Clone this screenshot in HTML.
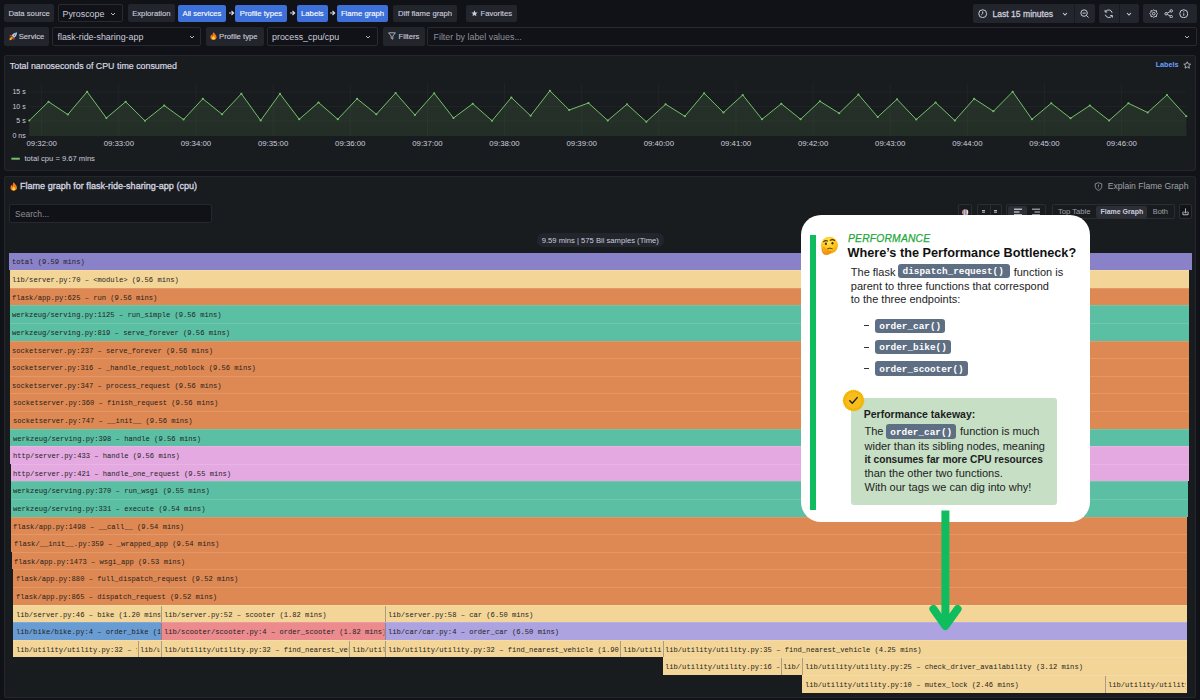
<!DOCTYPE html>
<html><head><meta charset="utf-8">
<style>
*{box-sizing:border-box;margin:0;padding:0}
html,body{width:1200px;height:700px;overflow:hidden;background:#111217;font-family:"Liberation Sans",sans-serif;color:#ccccdc;position:relative}
.a{position:absolute}
.lbl{position:absolute;background:#22252b;border-radius:2px;font-size:7.7px;color:#ccccdc;display:flex;align-items:center;justify-content:center;white-space:nowrap;-webkit-text-stroke:0.12px currentColor}
.sel{position:absolute;background:#111217;border:1px solid #282a30;border-radius:2px;font-size:8.9px;color:#ccccdc;display:flex;align-items:center;white-space:nowrap;padding-top:1.2px}
.btn{position:absolute;background:#3d71d9;border-radius:2px;font-size:7.7px;color:#fff;display:flex;align-items:center;justify-content:center;white-space:nowrap;-webkit-text-stroke:0.12px currentColor}
.dbtn{position:absolute;background:#22252b;border-radius:2px;font-size:7.7px;color:#ccccdc;display:flex;align-items:center;justify-content:center;white-space:nowrap;-webkit-text-stroke:0.12px currentColor}
.arr{position:absolute;top:8px;width:7px;height:10px}
.chev{position:absolute;width:6px;height:4px}
.panel{position:absolute;background:#191c1f;border:1px solid #24262c;border-radius:2px}
.xl{position:absolute;top:139px;width:40px;text-align:center;font-size:7.8px;color:#ccccdc;white-space:nowrap}
.yl{position:absolute;left:0;width:25.7px;text-align:right;font-size:7px;color:#ccccdc;white-space:nowrap}
.c{position:absolute;height:17.6px;overflow:hidden;white-space:nowrap;border-top:1px solid rgba(255,255,255,0.13)}
.c.r0{border-top:none}.c.r0 span{top:4.3px}
.c.s{box-shadow:inset 1px 0 rgba(110,110,110,0.55)}
.c span{position:absolute;left:2.8px;top:4px;font-family:"Liberation Mono",monospace;font-size:7.9px;line-height:10px;color:#1e1e1e;transform:scaleX(0.903);transform-origin:0 0;overflow:hidden}
.card{position:absolute;left:800.9px;top:214.7px;width:289px;height:307.3px;background:#fff;border-radius:20px}
.code{display:inline-block;background:#5e6e82;color:#fff;font-family:"Liberation Mono",monospace;font-weight:bold;border-radius:3px}
</style></head><body>

<!-- top row 1 -->
<div class="lbl" style="left:4.3px;top:4.1px;width:49.7px;height:18.4px">Data source</div>
<div class="sel" style="left:57.5px;top:4.1px;width:65px;height:18.4px;padding-left:4px">Pyroscope
  <svg class="chev" style="left:51.5px;top:7px" viewBox="0 0 6 4"><path d="M1 1 L3 3 L5 1" stroke="#ccccdc" stroke-width="0.9" fill="none"/></svg></div>
<div class="dbtn" style="left:127.75px;top:4.1px;width:47.25px;height:18.4px">Exploration</div>
<div class="btn" style="left:177.9px;top:4.75px;width:48.1px;height:17.25px">All services</div>
<svg class="arr" style="left:227.5px" viewBox="0 0 7 10"><path d="M1 5 H5.5 M3.5 3 L5.7 5 L3.5 7" stroke="#dcdce6" stroke-width="1.05" fill="none"/></svg>
<div class="btn" style="left:235px;top:4.75px;width:51.9px;height:17.25px">Profile types</div>
<svg class="arr" style="left:288.5px" viewBox="0 0 7 10"><path d="M1 5 H5.5 M3.5 3 L5.7 5 L3.5 7" stroke="#dcdce6" stroke-width="1.05" fill="none"/></svg>
<div class="btn" style="left:296.9px;top:4.75px;width:31px;height:17.25px">Labels</div>
<svg class="arr" style="left:329px" viewBox="0 0 7 10"><path d="M1 5 H5.5 M3.5 3 L5.7 5 L3.5 7" stroke="#dcdce6" stroke-width="1.05" fill="none"/></svg>
<div class="btn" style="left:337px;top:4.75px;width:51px;height:17.25px">Flame graph</div>
<div class="dbtn" style="left:393px;top:4.75px;width:64px;height:17.25px">Diff flame graph</div>
<div class="dbtn" style="left:466px;top:4.75px;width:51px;height:17.25px;justify-content:flex-start;padding-left:5px">
  <svg style="width:7px;height:7px;margin-right:2.5px" viewBox="0 0 10 10"><path d="M5 0.5 L6.3 3.4 L9.5 3.7 L7.1 5.8 L7.8 9 L5 7.3 L2.2 9 L2.9 5.8 L0.5 3.7 L3.7 3.4 Z" fill="#ccccdc"/></svg>Favorites</div>

<!-- time picker -->
<div class="dbtn" style="left:972.9px;top:4.1px;width:121.7px;height:18.8px;justify-content:flex-start;font-size:8.6px;-webkit-text-stroke:0.3px #ccccdc">
  <svg style="position:absolute;left:5.5px;top:4.8px;width:9.4px;height:9.4px" viewBox="0 0 10 10"><circle cx="5" cy="5" r="4.2" stroke="#ccccdc" stroke-width="1.05" fill="none"/><path d="M5 2.6 V5 L3.6 6.2" stroke="#ccccdc" stroke-width="1.05" fill="none"/></svg>
  <span style="position:absolute;left:19.5px;top:5px;line-height:10px">Last 15 minutes</span>
  <svg class="chev" style="left:89.5px;top:7.5px" viewBox="0 0 6 4"><path d="M1 1 L3 3 L5 1" stroke="#ccccdc" stroke-width="1.05" fill="none"/></svg>
  <div class="a" style="left:101.5px;top:0;width:1px;height:18.8px;background:#181b1f"></div>
  <svg style="position:absolute;left:107px;top:4.6px;width:9.5px;height:9.5px" viewBox="0 0 10 10"><circle cx="4.3" cy="4.3" r="3.4" stroke="#ccccdc" stroke-width="1.05" fill="none"/><path d="M2.6 4.3 H6 M6.8 6.8 L9 9" stroke="#ccccdc" stroke-width="1.05" fill="none"/></svg>
</div>
<div class="dbtn" style="left:1099.2px;top:4.1px;width:39.6px;height:18.8px">
  <svg style="position:absolute;left:5.2px;top:4.6px;width:9.5px;height:9.5px" viewBox="0 0 10 10"><path d="M8.6 4 A3.8 3.8 0 0 0 1.8 2.6 M1.4 6 A3.8 3.8 0 0 0 8.2 7.4" stroke="#ccccdc" stroke-width="1.05" fill="none"/><path d="M1.2 1 V3.2 H3.4 M8.8 9 V6.8 H6.6" stroke="#ccccdc" stroke-width="1.05" fill="none"/></svg>
  <div class="a" style="left:20.3px;top:0;width:1px;height:18.8px;background:#181b1f"></div>
  <svg class="chev" style="left:27px;top:7.5px" viewBox="0 0 6 4"><path d="M1 1 L3 3 L5 1" stroke="#ccccdc" stroke-width="1.05" fill="none"/></svg>
</div>
<div class="dbtn" style="left:1143px;top:4.1px;width:53.5px;height:18.8px">
  <svg style="position:absolute;left:5.5px;top:4.6px;width:9.5px;height:9.5px" viewBox="0 0 10 10"><path d="M5 0.8 L6.2 1.9 L7.9 1.8 L8 3.6 L9.2 4.8 L8 6.1 L7.9 8 L6.2 7.9 L5 9 L3.8 7.9 L2.1 8 L2 6.1 L0.8 4.8 L2 3.6 L2.1 1.8 L3.8 1.9 Z" stroke="#ccccdc" stroke-width="1.0" fill="none"/><circle cx="5" cy="4.9" r="1.4" stroke="#ccccdc" stroke-width="1.0" fill="none"/></svg>
  <svg style="position:absolute;left:20.5px;top:4.6px;width:9.5px;height:9.5px" viewBox="0 0 10 10"><circle cx="7.6" cy="2" r="1.3" stroke="#ccccdc" stroke-width="1.0" fill="none"/><circle cx="2.2" cy="5" r="1.3" stroke="#ccccdc" stroke-width="1.0" fill="none"/><circle cx="7.6" cy="8" r="1.3" stroke="#ccccdc" stroke-width="1.0" fill="none"/><path d="M3.4 4.3 L6.4 2.7 M3.4 5.7 L6.4 7.3" stroke="#ccccdc" stroke-width="1.0"/></svg>
  <svg style="position:absolute;left:35.5px;top:4.6px;width:9.5px;height:9.5px" viewBox="0 0 10 10"><circle cx="5" cy="5" r="4.2" stroke="#ccccdc" stroke-width="1.05" fill="none"/><path d="M5 4.5 V7.2" stroke="#ccccdc" stroke-width="1"/><circle cx="5" cy="3" r="0.6" fill="#ccccdc"/></svg>
</div>

<!-- top row 2 -->
<div class="lbl" style="left:4.3px;top:27.1px;width:44.7px;height:18.5px;justify-content:flex-start;padding-left:4.5px">
  <svg style="width:8.5px;height:8.5px;margin-right:1.6px;margin-left:-0.2px" viewBox="0 0 10 10"><path d="M9.6 0.6 C7 0.6 4.6 1.8 3 4 L6 7 C8.2 5.4 9.4 3 9.6 0.6 Z" fill="#a9cdea"/><path d="M9.6 0.6 C8.4 0.8 7.4 1.3 6.4 2 L8 3.6 C8.7 2.6 9.3 1.7 9.6 0.6 Z" fill="#7fb6e6"/><circle cx="6.3" cy="3.7" r="1.1" fill="#f4d6d6"/><circle cx="6.3" cy="3.7" r="0.65" fill="#6a0f10"/><path d="M3.4 3.6 L1.2 3.4 L0.4 5 L2.6 5.2 Z" fill="#e8361f"/><path d="M6.4 6.6 L6.6 8.8 L5 9.6 L4.8 7.4 Z" fill="#e81d1d"/><path d="M3 5.2 L4.8 7 L2.4 9.4 L0.6 9.6 L0.8 7.6 Z" fill="#f7c316"/><path d="M3.2 5.8 L4.2 6.8 L2.6 8.4 L1.6 8.4 L1.6 7.4 Z" fill="#ff8a1c"/></svg>Service</div>
<div class="sel" style="left:52px;top:27.1px;width:148.6px;height:18.5px;padding-left:4.5px">flask-ride-sharing-app
  <svg class="chev" style="left:135.5px;top:7px" viewBox="0 0 6 4"><path d="M1 1 L3 3 L5 1" stroke="#ccccdc" stroke-width="0.9" fill="none"/></svg></div>
<div class="lbl" style="left:205.6px;top:27.1px;width:58.2px;height:18.5px;justify-content:flex-start;padding-left:4.5px">
  <svg style="width:7px;height:8px;margin-right:2px" viewBox="0 0 7 8"><path d="M3.5 0.3 C5 2 6.6 3.4 6.6 5.2 C6.6 6.9 5.2 7.8 3.5 7.8 C1.8 7.8 0.4 6.9 0.4 5.2 C0.4 3.8 1.2 3 1.6 2.4 C1.8 3.2 2.2 3.6 2.6 3.7 C2.4 2.4 2.8 1.2 3.5 0.3 Z" fill="#f4781c"/><path d="M3.5 4 C4.4 4.8 5 5.6 5 6.3 C5 7.1 4.3 7.6 3.5 7.6 C2.7 7.6 2 7.1 2 6.3 C2 5.5 2.8 4.8 3.5 4 Z" fill="#ffd23a"/></svg>Profile type</div>
<div class="sel" style="left:266.5px;top:27.1px;width:111.5px;height:18.5px;padding-left:4.5px">process_cpu/cpu
  <svg class="chev" style="left:97px;top:7px" viewBox="0 0 6 4"><path d="M1 1 L3 3 L5 1" stroke="#ccccdc" stroke-width="0.9" fill="none"/></svg></div>
<div class="lbl" style="left:383px;top:27.1px;width:41.6px;height:18.5px;justify-content:flex-start;padding-left:5px">
  <svg style="width:8px;height:8px;margin-right:2.5px" viewBox="0 0 8 8"><path d="M0.6 0.8 H7.4 L4.8 4 V7.2 L3.2 6.2 V4 Z" stroke="#ccccdc" stroke-width="0.8" fill="none" stroke-linejoin="round"/></svg>Filters</div>
<div class="sel" style="left:427px;top:27.1px;width:769.8px;height:18.9px;padding-left:5.5px;color:#8e8e99">Filter by label values...
  <svg class="chev" style="left:756px;top:7px" viewBox="0 0 6 4"><path d="M1 1 L3 3 L5 1" stroke="#ccccdc" stroke-width="0.9" fill="none"/></svg></div>

<!-- chart panel -->
<div class="panel" style="left:4.3px;top:55.1px;width:1192.1px;height:116.2px"></div>
<div class="a" style="left:9.8px;top:60.5px;font-size:8.86px;line-height:10px;color:#d8d8e2;white-space:nowrap;-webkit-text-stroke:0.2px #d8d8e2">Total nanoseconds of CPU time consumed</div>
<div class="a" style="left:1155.7px;top:60.3px;font-size:7.2px;line-height:10px;color:#6e9fff;font-weight:bold;white-space:nowrap">Labels</div>
<svg class="a" style="left:1183.3px;top:60.9px;width:8.4px;height:8.4px" viewBox="0 0 10 10"><path d="M5 0.9 L6.2 3.5 L9.1 3.8 L6.9 5.7 L7.6 8.6 L5 7.1 L2.4 8.6 L3.1 5.7 L0.9 3.8 L3.8 3.5 Z" stroke="#ccccdc" stroke-width="0.9" fill="none" stroke-linejoin="round"/></svg>
<div class="yl" style="top:88.3px">15 s</div>
<div class="yl" style="top:102.6px">10 s</div>
<div class="yl" style="top:117.2px">5 s</div>
<div class="yl" style="top:131.6px">0 ns</div>
<svg class="a" style="left:0;top:0;width:1200px;height:170px" viewBox="0 0 1200 170">
  <defs><linearGradient id="g" x1="0" y1="0" x2="0" y2="1"><stop offset="0" stop-color="#73bf69" stop-opacity="0.13"/><stop offset="1" stop-color="#73bf69" stop-opacity="0.11"/></linearGradient></defs>
  <g stroke="rgba(204,204,220,0.045)" stroke-width="1">
    <line x1="29.25" y1="92.1" x2="1186.25" y2="92.1"/><line x1="29.25" y1="106.4" x2="1186.25" y2="106.4"/><line x1="29.25" y1="121" x2="1186.25" y2="121"/>
    <line x1="41.70" y1="83" x2="41.70" y2="136"/><line x1="118.84" y1="83" x2="118.84" y2="136"/><line x1="195.98" y1="83" x2="195.98" y2="136"/><line x1="273.12" y1="83" x2="273.12" y2="136"/><line x1="350.26" y1="83" x2="350.26" y2="136"/><line x1="427.40" y1="83" x2="427.40" y2="136"/><line x1="504.54" y1="83" x2="504.54" y2="136"/><line x1="581.68" y1="83" x2="581.68" y2="136"/><line x1="658.82" y1="83" x2="658.82" y2="136"/><line x1="735.96" y1="83" x2="735.96" y2="136"/><line x1="813.10" y1="83" x2="813.10" y2="136"/><line x1="890.24" y1="83" x2="890.24" y2="136"/><line x1="967.38" y1="83" x2="967.38" y2="136"/><line x1="1044.52" y1="83" x2="1044.52" y2="136"/><line x1="1121.66" y1="83" x2="1121.66" y2="136"/>
  </g>
  <path d="M29.25,136 L29.25,120.50 L48.53,101.75 L67.82,114.50 L87.10,91.75 L106.38,118.00 L125.67,101.75 L144.95,120.75 L164.23,105.50 L183.52,119.50 L202.80,98.75 L222.08,114.25 L241.37,93.75 L260.65,120.50 L279.93,93.75 L299.22,119.25 L318.50,102.50 L337.78,119.25 L357.07,98.75 L376.35,114.25 L395.63,93.00 L414.92,115.00 L434.20,93.25 L453.48,118.00 L472.77,103.75 L492.05,120.75 L511.33,97.50 L530.62,115.75 L549.90,90.75 L569.18,110.00 L588.47,103.00 L607.75,120.50 L627.03,104.25 L646.32,121.75 L665.60,104.25 L684.88,116.25 L704.17,93.25 L723.45,112.50 L742.73,95.00 L762.02,119.25 L781.30,103.75 L800.58,119.25 L819.87,101.25 L839.15,113.25 L858.43,94.50 L877.72,117.00 L897.00,99.25 L916.28,119.50 L935.57,102.50 L954.85,120.50 L974.13,98.75 L993.42,111.25 L1012.70,91.75 L1031.98,119.25 L1051.27,103.25 L1070.55,118.25 L1089.83,105.50 L1109.12,120.50 L1128.40,103.25 L1147.68,112.50 L1166.97,95.00 L1186.25,116.25 L1186.25,136 Z" fill="url(#g)"/>
  <polyline points="29.25,120.50 48.53,101.75 67.82,114.50 87.10,91.75 106.38,118.00 125.67,101.75 144.95,120.75 164.23,105.50 183.52,119.50 202.80,98.75 222.08,114.25 241.37,93.75 260.65,120.50 279.93,93.75 299.22,119.25 318.50,102.50 337.78,119.25 357.07,98.75 376.35,114.25 395.63,93.00 414.92,115.00 434.20,93.25 453.48,118.00 472.77,103.75 492.05,120.75 511.33,97.50 530.62,115.75 549.90,90.75 569.18,110.00 588.47,103.00 607.75,120.50 627.03,104.25 646.32,121.75 665.60,104.25 684.88,116.25 704.17,93.25 723.45,112.50 742.73,95.00 762.02,119.25 781.30,103.75 800.58,119.25 819.87,101.25 839.15,113.25 858.43,94.50 877.72,117.00 897.00,99.25 916.28,119.50 935.57,102.50 954.85,120.50 974.13,98.75 993.42,111.25 1012.70,91.75 1031.98,119.25 1051.27,103.25 1070.55,118.25 1089.83,105.50 1109.12,120.50 1128.40,103.25 1147.68,112.50 1166.97,95.00 1186.25,116.25" fill="none" stroke="#73bf69" stroke-width="1"/>
  <g fill="#73bf69"><circle cx="29.25" cy="120.50" r="1.1"/><circle cx="48.53" cy="101.75" r="1.1"/><circle cx="67.82" cy="114.50" r="1.1"/><circle cx="87.10" cy="91.75" r="1.1"/><circle cx="106.38" cy="118.00" r="1.1"/><circle cx="125.67" cy="101.75" r="1.1"/><circle cx="144.95" cy="120.75" r="1.1"/><circle cx="164.23" cy="105.50" r="1.1"/><circle cx="183.52" cy="119.50" r="1.1"/><circle cx="202.80" cy="98.75" r="1.1"/><circle cx="222.08" cy="114.25" r="1.1"/><circle cx="241.37" cy="93.75" r="1.1"/><circle cx="260.65" cy="120.50" r="1.1"/><circle cx="279.93" cy="93.75" r="1.1"/><circle cx="299.22" cy="119.25" r="1.1"/><circle cx="318.50" cy="102.50" r="1.1"/><circle cx="337.78" cy="119.25" r="1.1"/><circle cx="357.07" cy="98.75" r="1.1"/><circle cx="376.35" cy="114.25" r="1.1"/><circle cx="395.63" cy="93.00" r="1.1"/><circle cx="414.92" cy="115.00" r="1.1"/><circle cx="434.20" cy="93.25" r="1.1"/><circle cx="453.48" cy="118.00" r="1.1"/><circle cx="472.77" cy="103.75" r="1.1"/><circle cx="492.05" cy="120.75" r="1.1"/><circle cx="511.33" cy="97.50" r="1.1"/><circle cx="530.62" cy="115.75" r="1.1"/><circle cx="549.90" cy="90.75" r="1.1"/><circle cx="569.18" cy="110.00" r="1.1"/><circle cx="588.47" cy="103.00" r="1.1"/><circle cx="607.75" cy="120.50" r="1.1"/><circle cx="627.03" cy="104.25" r="1.1"/><circle cx="646.32" cy="121.75" r="1.1"/><circle cx="665.60" cy="104.25" r="1.1"/><circle cx="684.88" cy="116.25" r="1.1"/><circle cx="704.17" cy="93.25" r="1.1"/><circle cx="723.45" cy="112.50" r="1.1"/><circle cx="742.73" cy="95.00" r="1.1"/><circle cx="762.02" cy="119.25" r="1.1"/><circle cx="781.30" cy="103.75" r="1.1"/><circle cx="800.58" cy="119.25" r="1.1"/><circle cx="819.87" cy="101.25" r="1.1"/><circle cx="839.15" cy="113.25" r="1.1"/><circle cx="858.43" cy="94.50" r="1.1"/><circle cx="877.72" cy="117.00" r="1.1"/><circle cx="897.00" cy="99.25" r="1.1"/><circle cx="916.28" cy="119.50" r="1.1"/><circle cx="935.57" cy="102.50" r="1.1"/><circle cx="954.85" cy="120.50" r="1.1"/><circle cx="974.13" cy="98.75" r="1.1"/><circle cx="993.42" cy="111.25" r="1.1"/><circle cx="1012.70" cy="91.75" r="1.1"/><circle cx="1031.98" cy="119.25" r="1.1"/><circle cx="1051.27" cy="103.25" r="1.1"/><circle cx="1070.55" cy="118.25" r="1.1"/><circle cx="1089.83" cy="105.50" r="1.1"/><circle cx="1109.12" cy="120.50" r="1.1"/><circle cx="1128.40" cy="103.25" r="1.1"/><circle cx="1147.68" cy="112.50" r="1.1"/><circle cx="1166.97" cy="95.00" r="1.1"/><circle cx="1186.25" cy="116.25" r="1.1"/></g>
  <line x1="11.4" y1="158.7" x2="19.8" y2="158.7" stroke="#73bf69" stroke-width="2" stroke-linecap="butt"/>
</svg>
<div class="xl" style="left:21.70px">09:32:00</div><div class="xl" style="left:98.84px">09:33:00</div><div class="xl" style="left:175.98px">09:34:00</div><div class="xl" style="left:253.12px">09:35:00</div><div class="xl" style="left:330.26px">09:36:00</div><div class="xl" style="left:407.40px">09:37:00</div><div class="xl" style="left:484.54px">09:38:00</div><div class="xl" style="left:561.68px">09:39:00</div><div class="xl" style="left:638.82px">09:40:00</div><div class="xl" style="left:715.96px">09:41:00</div><div class="xl" style="left:793.10px">09:42:00</div><div class="xl" style="left:870.24px">09:43:00</div><div class="xl" style="left:947.38px">09:44:00</div><div class="xl" style="left:1024.52px">09:45:00</div><div class="xl" style="left:1101.66px">09:46:00</div>
<div class="a" style="left:24.5px;top:153.5px;font-size:7.61px;line-height:10px;color:#ccccdc;white-space:nowrap">total cpu = 9.67 mins</div>

<!-- flame panel -->
<div class="panel" style="left:4.3px;top:176px;width:1192.1px;height:521.6px"></div>
<svg class="a" style="left:9.8px;top:182px;width:7.4px;height:9px" viewBox="0 0 7 8" preserveAspectRatio="none"><path d="M3.5 0.3 C5 2 6.6 3.4 6.6 5.2 C6.6 6.9 5.2 7.8 3.5 7.8 C1.8 7.8 0.4 6.9 0.4 5.2 C0.4 3.8 1.2 3 1.6 2.4 C1.8 3.2 2.2 3.6 2.6 3.7 C2.4 2.4 2.8 1.2 3.5 0.3 Z" fill="#f4781c"/><path d="M3.5 4 C4.4 4.8 5 5.6 5 6.3 C5 7.1 4.3 7.6 3.5 7.6 C2.7 7.6 2 7.1 2 6.3 C2 5.5 2.8 4.8 3.5 4 Z" fill="#ffd23a"/></svg>
<div class="a" style="left:20px;top:181.3px;font-size:9.05px;line-height:10px;color:#d8d8e2;white-space:nowrap;-webkit-text-stroke:0.3px #d8d8e2">Flame graph for flask-ride-sharing-app (cpu)</div>
<div class="a" style="left:1093.5px;top:181.5px;width:9px;height:9px"><svg viewBox="0 0 10 10" width="9" height="9" style="display:block"><path d="M5 0.8 L8.6 2 V5 C8.6 7 7 8.6 5 9.3 C3 8.6 1.4 7 1.4 5 V2 Z" stroke="#9fa0a8" stroke-width="0.9" fill="none"/><path d="M5 3 V5.3" stroke="#9fa0a8" stroke-width="0.9"/><circle cx="5" cy="6.7" r="0.5" fill="#9fa0a8"/></svg></div>
<div class="a" style="left:1107.7px;top:181.3px;font-size:8.6px;line-height:10px;color:#9fa0a8;white-space:nowrap">Explain Flame Graph</div>
<div class="sel" style="left:9.3px;top:204.3px;width:203px;height:19px;padding-left:4.8px;font-size:8.5px;color:#8e8e99;border-color:#26282d">Search...</div>

<!-- toolbar -->
<div class="a" style="left:958.3px;top:204.4px;width:14.2px;height:14.6px;border:1px solid #2b2d33;border-radius:2px"></div>
<div class="a" style="left:977px;top:204.4px;width:24.7px;height:14.6px;border:1px solid #2b2d33;border-radius:2px"></div>
<div class="a" style="left:989.6px;top:204.4px;width:1px;height:14.6px;background:#2b2d33"></div>
<div class="a" style="left:1006.25px;top:204.4px;width:40px;height:14.6px;border:1px solid #2b2d33;border-radius:2px"></div>
<div class="a" style="left:1008.2px;top:206.2px;width:18.5px;height:11.4px;background:#2c2f36;border-radius:2px"></div>
<div class="a" style="left:1051.5px;top:204.4px;width:123.1px;height:14.6px;border:1px solid #2b2d33;border-radius:2px"></div>
<div class="a" style="left:1095.8px;top:206.2px;width:51.7px;height:11.4px;background:#2c2f36;border-radius:2px"></div>
<div class="a" style="left:1179.2px;top:204.4px;width:12.6px;height:14.6px;border:1px solid #2b2d33;border-radius:2px;background:#121317"></div>
<svg class="a" style="left:962px;top:208.5px;width:6.6px;height:6.6px" viewBox="0 0 8 8"><defs><clipPath id="cc"><circle cx="4" cy="4" r="3.8"/></clipPath></defs><g clip-path="url(#cc)"><rect x="0" y="0" width="2" height="8" fill="#f0a070"/><rect x="2" y="0" width="2" height="8" fill="#e8a6d8"/><rect x="4" y="0" width="2" height="8" fill="#8fb8e8"/><rect x="6" y="0" width="2" height="8" fill="#f0e08a"/></g></svg>
<svg class="a" style="left:982px;top:209px;width:3.4px;height:4.4px" viewBox="0 0 4 5"><path d="M0.3 1.6 H3.7 M0.3 3.6 H3.7" stroke="#b0b0bc" stroke-width="1.2" stroke-linecap="round"/></svg>
<svg class="a" style="left:994px;top:209px;width:3.4px;height:4.4px" viewBox="0 0 4 5"><path d="M0.3 1.6 H3.7 M0.3 3.6 H3.7" stroke="#b0b0bc" stroke-width="1.2" stroke-linecap="round"/></svg>
<svg class="a" style="left:1013.5px;top:207.5px;width:8px;height:8px" viewBox="0 0 8 8"><path d="M0 1.2 H8 M0 4 H5.5 M0 6.8 H8" stroke="#b4b4bc" stroke-width="1.5"/></svg>
<svg class="a" style="left:1032px;top:207.5px;width:8px;height:8px" viewBox="0 0 8 8"><path d="M0 1.2 H8 M2.5 4 H8 M0 6.8 H8" stroke="#8e8e99" stroke-width="1.5"/></svg>
<svg class="a" style="left:1181.8px;top:208.2px;width:7px;height:7.6px" viewBox="0 0 7 8"><path d="M0.8 4 V6.6 Q0.8 7.2 1.4 7.2 H5.6 Q6.2 7.2 6.2 6.6 V4" stroke="#b4b4bc" stroke-width="1.1" fill="none"/><path d="M3.5 0.4 V5.4 M1.9 3.8 L3.5 5.4 L5.1 3.8" stroke="#b4b4bc" stroke-width="1" fill="none"/></svg>
<div class="a" style="left:1057.9px;top:207px;font-size:7.67px;line-height:9px;color:#9fa0a8;white-space:nowrap">Top Table</div>
<div class="a" style="left:1100.4px;top:207px;font-size:7.02px;line-height:9px;font-weight:bold;color:#ccccdc;white-space:nowrap">Flame Graph</div>
<div class="a" style="left:1152.7px;top:207px;font-size:7.44px;line-height:9px;color:#9fa0a8;white-space:nowrap">Both</div>

<div class="a" style="left:536.7px;top:232.7px;width:127.3px;height:14.6px;background:#22252b;border-radius:7px"></div>
<div class="a" style="left:541.7px;top:235.5px;font-size:7.65px;line-height:9px;color:#ccccdc;white-space:nowrap">9.59 mins | 575 Bil samples (Time)</div>

<!-- flame graph -->
<div class="c r0" style="left:9.10px;top:252.60px;width:1182.50px;background:#8982c9"><span style="width:1305.43px">total (9.59 mins)</span></div><div class="c" style="left:9.60px;top:270.20px;width:1179.30px;background:#f3d597"><span style="width:1301.88px">lib/server.py:70 – &lt;module&gt; (9.56 mins)</span></div><div class="c" style="left:9.60px;top:287.80px;width:1179.30px;background:#de8953"><span style="width:1301.88px">flask/app.py:625 – run (9.56 mins)</span></div><div class="c" style="left:9.60px;top:305.40px;width:1179.30px;background:#5bbfa3"><span style="width:1301.88px">werkzeug/serving.py:1125 – run_simple (9.56 mins)</span></div><div class="c" style="left:9.60px;top:323.00px;width:1179.30px;background:#5bbfa3"><span style="width:1301.88px">werkzeug/serving.py:819 – serve_forever (9.56 mins)</span></div><div class="c" style="left:9.60px;top:340.60px;width:1179.30px;background:#de8953"><span style="width:1301.88px">socketserver.py:237 – serve_forever (9.56 mins)</span></div><div class="c" style="left:9.70px;top:358.20px;width:1179.20px;background:#de8953"><span style="width:1301.77px">socketserver.py:316 – _handle_request_noblock (9.56 mins)</span></div><div class="c" style="left:9.70px;top:375.80px;width:1179.20px;background:#de8953"><span style="width:1301.77px">socketserver.py:347 – process_request (9.56 mins)</span></div><div class="c" style="left:9.75px;top:393.40px;width:1179.15px;background:#de8953"><span style="width:1301.72px">socketserver.py:360 – finish_request (9.56 mins)</span></div><div class="c" style="left:9.75px;top:411.00px;width:1179.15px;background:#de8953"><span style="width:1301.72px">socketserver.py:747 – __init__ (9.56 mins)</span></div><div class="c" style="left:9.75px;top:428.60px;width:1179.25px;background:#5bbfa3"><span style="width:1301.83px">werkzeug/serving.py:398 – handle (9.56 mins)</span></div><div class="c" style="left:10.20px;top:446.20px;width:1178.80px;background:#e4a9e0"><span style="width:1301.33px">http/server.py:433 – handle (9.56 mins)</span></div><div class="c" style="left:10.70px;top:463.80px;width:1178.30px;background:#e4a9e0"><span style="width:1300.78px">http/server.py:421 – handle_one_request (9.55 mins)</span></div><div class="c" style="left:10.70px;top:481.40px;width:1177.50px;background:#5bbfa3"><span style="width:1299.89px">werkzeug/serving.py:370 – run_wsgi (9.55 mins)</span></div><div class="c" style="left:10.70px;top:499.00px;width:1177.50px;background:#5bbfa3"><span style="width:1299.89px">werkzeug/serving.py:331 – execute (9.54 mins)</span></div><div class="c" style="left:10.70px;top:516.60px;width:1176.70px;background:#de8953"><span style="width:1299.00px">flask/app.py:1498 – __call__ (9.54 mins)</span></div><div class="c" style="left:11.00px;top:534.20px;width:1176.40px;background:#de8953"><span style="width:1298.67px">flask/__init__.py:359 – _wrapped_app (9.54 mins)</span></div><div class="c" style="left:11.50px;top:551.80px;width:1175.90px;background:#de8953"><span style="width:1298.12px">flask/app.py:1473 – wsgi_app (9.53 mins)</span></div><div class="c" style="left:13.00px;top:569.40px;width:1174.40px;background:#de8953"><span style="width:1296.46px">flask/app.py:880 – full_dispatch_request (9.52 mins)</span></div><div class="c" style="left:13.00px;top:587.00px;width:1174.20px;background:#de8953"><span style="width:1296.23px">flask/app.py:865 – dispatch_request (9.52 mins)</span></div><div class="c" style="left:13.00px;top:604.60px;width:147.80px;background:#f3d597"><span style="width:159.58px">lib/server.py:46 – bike (1.20 mins)</span></div><div class="c s" style="left:160.80px;top:604.60px;width:224.20px;background:#f3d597"><span style="width:244.19px">lib/server.py:52 – scooter (1.82 mins)</span></div><div class="c s" style="left:385.00px;top:604.60px;width:801.70px;background:#f3d597"><span style="width:883.72px">lib/server.py:58 – car (6.50 mins)</span></div><div class="c" style="left:13.00px;top:622.20px;width:147.80px;background:#6a9cd4"><span style="width:159.58px">lib/bike/bike.py:4 – order_bike (1.20 mins)</span></div><div class="c s" style="left:160.80px;top:622.20px;width:224.20px;background:#ec8b8e"><span style="width:244.19px">lib/scooter/scooter.py:4 – order_scooter (1.82 mins)</span></div><div class="c s" style="left:385.00px;top:622.20px;width:801.70px;background:#aca3e0"><span style="width:883.72px">lib/car/car.py:4 – order_car (6.50 mins)</span></div><div class="c" style="left:13.00px;top:639.80px;width:124.50px;background:#f3d597"><span style="width:133.78px">lib/utility/utility.py:32 – find_nearest_vehicle (1.01 mins)</span></div><div class="c s" style="left:137.50px;top:639.80px;width:23.30px;background:#f3d597"><span style="width:21.71px">lib/utility/utility.py:35 – find_nearest_vehicle</span></div><div class="c s" style="left:160.80px;top:639.80px;width:187.95px;background:#f3d597"><span style="width:204.04px">lib/utility/utility.py:32 – find_nearest_vehicle (1.52 mins)</span></div><div class="c s" style="left:348.75px;top:639.80px;width:36.25px;background:#f3d597"><span style="width:36.05px">lib/utility/utility.py:35</span></div><div class="c s" style="left:385.00px;top:639.80px;width:235.00px;background:#f3d597"><span style="width:256.15px">lib/utility/utility.py:32 – find_nearest_vehicle (1.90 mins)</span></div><div class="c s" style="left:620.00px;top:639.80px;width:42.50px;background:#f3d597"><span style="width:42.97px">lib/utility/utility.py:16</span></div><div class="c s" style="left:662.50px;top:639.80px;width:524.20px;background:#f3d597"><span style="width:576.41px">lib/utility/utility.py:35 – find_nearest_vehicle (4.25 mins)</span></div><div class="c" style="left:662.50px;top:657.40px;width:118.00px;background:#f3d597"><span style="width:126.58px">lib/utility/utility.py:16 – check_driver_availability (0.96 mins)</span></div><div class="c s" style="left:780.50px;top:657.40px;width:21.25px;background:#f3d597"><span style="width:19.44px">lib/utility/utility.py:35</span></div><div class="c s" style="left:801.75px;top:657.40px;width:384.95px;background:#f3d597"><span style="width:422.20px">lib/utility/utility.py:25 – check_driver_availability (3.12 mins)</span></div><div class="c" style="left:801.75px;top:675.00px;width:303.55px;background:#f3d597"><span style="width:332.06px">lib/utility/utility.py:10 – mutex_lock (2.46 mins)</span></div><div class="c s" style="left:1105.30px;top:675.00px;width:81.40px;background:#f3d597"><span style="width:86.05px">lib/utility/utility.py:25</span></div>

<!-- card -->
<div class="card"></div>
<div class="a" style="left:810px;top:234.9px;width:5.7px;height:275.3px;background:#0fbd5e"></div>
<div class="a" style="left:848.00px;top:232.75px;font-size:10.3px;line-height:12.36px;font-style:italic;color:#1fa83a;white-space:nowrap;letter-spacing:0.2px;-webkit-text-stroke:0.25px #1fa83a;">PERFORMANCE</div>
<div class="a" style="left:847.50px;top:245.98px;font-size:12.7px;line-height:15.24px;font-weight:bold;color:#111;white-space:nowrap;">Where’s the Performance Bottleneck?</div>
<div class="a" style="left:850.80px;top:265.99px;font-size:11px;line-height:13.20px;color:#1d1d1d;white-space:nowrap;">The flask</div>
<div class="a" style="left:898.30px;top:263.50px;width:111.30px;height:14.40px;background:#5e6e83;border-radius:3px"></div>
<div class="a" style="left:902.60px;top:265.85px;font-size:9.4px;line-height:11.28px;font-family:'Liberation Mono',monospace;font-weight:bold;color:#fff;white-space:nowrap;transform:scaleX(1.0);">dispatch_request()</div>
<div class="a" style="left:1013.70px;top:265.99px;font-size:11px;line-height:13.20px;color:#1d1d1d;white-space:nowrap;">function is</div>
<div class="a" style="left:850.80px;top:279.59px;font-size:11px;line-height:13.20px;color:#1d1d1d;white-space:nowrap;">parent to three functions that correspond</div>
<div class="a" style="left:850.80px;top:293.09px;font-size:11px;line-height:13.20px;color:#1d1d1d;white-space:nowrap;">to the three endpoints:</div>
<div class="a" style="left:863.8px;top:325.45px;width:4.8px;height:0.8px;background:#333"></div>
<div class="a" style="left:875.20px;top:318.60px;width:69.50px;height:14.40px;background:#5e6e83;border-radius:3px"></div>
<div class="a" style="left:879.30px;top:320.95px;font-size:9.4px;line-height:11.28px;font-family:'Liberation Mono',monospace;font-weight:bold;color:#fff;white-space:nowrap;transform:scaleX(1.0);">order_car()</div>
<div class="a" style="left:863.8px;top:346.75px;width:4.8px;height:0.8px;background:#333"></div>
<div class="a" style="left:875.20px;top:339.80px;width:76.30px;height:14.60px;background:#5e6e83;border-radius:3px"></div>
<div class="a" style="left:879.30px;top:342.25px;font-size:9.4px;line-height:11.28px;font-family:'Liberation Mono',monospace;font-weight:bold;color:#fff;white-space:nowrap;transform:scaleX(1.0);">order_bike()</div>
<div class="a" style="left:863.8px;top:368.05px;width:4.8px;height:0.8px;background:#333"></div>
<div class="a" style="left:875.20px;top:361.20px;width:92.60px;height:14.40px;background:#5e6e83;border-radius:3px"></div>
<div class="a" style="left:879.30px;top:363.55px;font-size:9.4px;line-height:11.28px;font-family:'Liberation Mono',monospace;font-weight:bold;color:#fff;white-space:nowrap;transform:scaleX(1.0);">order_scooter()</div>
<div class="a" style="left:851.25px;top:398px;width:205.75px;height:106.5px;background:#c6dfc5;border-radius:3px"></div>
<svg class="a" style="left:841.5px;top:388.5px;width:23px;height:23px" viewBox="0 0 23 23">
<path d="M22.50,11.50 L21.54,12.63 L22.22,13.95 L21.03,14.84 L21.41,16.27 L20.05,16.87 L20.10,18.36 L18.64,18.64 L18.36,20.10 L16.87,20.05 L16.27,21.41 L14.84,21.03 L13.95,22.22 L12.63,21.54 L11.50,22.50 L10.37,21.54 L9.05,22.22 L8.16,21.03 L6.73,21.41 L6.13,20.05 L4.64,20.10 L4.36,18.64 L2.90,18.36 L2.95,16.87 L1.59,16.27 L1.97,14.84 L0.78,13.95 L1.46,12.63 L0.50,11.50 L1.46,10.37 L0.78,9.05 L1.97,8.16 L1.59,6.73 L2.95,6.13 L2.90,4.64 L4.36,4.36 L4.64,2.90 L6.13,2.95 L6.73,1.59 L8.16,1.97 L9.05,0.78 L10.37,1.46 L11.50,0.50 L12.63,1.46 L13.95,0.78 L14.84,1.97 L16.27,1.59 L16.87,2.95 L18.36,2.90 L18.64,4.36 L20.10,4.64 L20.05,6.13 L21.41,6.73 L21.03,8.16 L22.22,9.05 L21.54,10.37Z" fill="#f4b400"/><circle cx="11.5" cy="11.5" r="8.2" fill="#f6bd1c"/>
<path d="M7.8 11.8 L10.3 14.2 L15.2 8.6" stroke="#1d1d1d" stroke-width="1.4" fill="none" stroke-linecap="round" stroke-linejoin="round"/></svg>
<div class="a" style="left:863.75px;top:408.06px;font-size:10.5px;line-height:12.60px;font-weight:bold;color:#1d1d1d;white-space:nowrap;">Performance takeway:</div>
<div class="a" style="left:864.50px;top:425.09px;font-size:11px;line-height:13.20px;color:#1d1d1d;white-space:nowrap;">The</div>
<div class="a" style="left:886.25px;top:424.25px;width:70.00px;height:15.00px;background:#5e6e83;border-radius:3px"></div>
<div class="a" style="left:890.30px;top:426.90px;font-size:9.4px;line-height:11.28px;font-family:'Liberation Mono',monospace;font-weight:bold;color:#fff;white-space:nowrap;transform:scaleX(1.0);">order_car()</div>
<div class="a" style="left:960.00px;top:425.09px;font-size:11px;line-height:13.20px;color:#1d1d1d;white-space:nowrap;">function is much</div>
<div class="a" style="left:864.50px;top:439.59px;font-size:11px;line-height:13.20px;color:#1d1d1d;white-space:nowrap;">wider than its sibling nodes, meaning</div>
<div class="a" style="left:864.50px;top:454.13px;font-size:10.16px;line-height:12.19px;font-weight:bold;color:#1d1d1d;white-space:nowrap;">it consumes far more CPU resources</div>
<div class="a" style="left:864.50px;top:467.09px;font-size:11px;line-height:13.20px;color:#1d1d1d;white-space:nowrap;">than the other two functions.</div>
<div class="a" style="left:864.50px;top:480.84px;font-size:11px;line-height:13.20px;color:#1d1d1d;white-space:nowrap;">With our tags we can dig into why!</div>
<svg class="a" style="left:920px;top:500px;width:50px;height:140px" viewBox="920 500 50 140">
<path d="M945.4 510.4 V626" stroke="#0fbd5e" stroke-width="8" stroke-linecap="butt" fill="none"/>
<path d="M933.4 609 L945.4 626 L957.6 609" stroke="#0fbd5e" stroke-width="8" stroke-linecap="round" stroke-linejoin="round" fill="none"/></svg>
<svg class="a" style="left:819.2px;top:236px;width:19.5px;height:19.5px" viewBox="0 0 20 20">
<defs><radialGradient id="ef" cx="0.45" cy="0.3" r="0.75"><stop offset="0" stop-color="#ffe45c"/><stop offset="0.6" stop-color="#fdc418"/><stop offset="1" stop-color="#f39a00"/></radialGradient>
<linearGradient id="hf" x1="0" y1="0" x2="0" y2="1"><stop offset="0" stop-color="#ffb52e"/><stop offset="1" stop-color="#f08a00"/></linearGradient></defs>
<circle cx="10.7" cy="9.4" r="8.7" fill="url(#ef)"/>
<path d="M4.8 5.8 Q6.6 4.2 8.8 5.2" stroke="#5b3300" stroke-width="1.2" fill="none" stroke-linecap="round"/>
<path d="M11.6 4.4 Q13.8 2.8 16 4.6" stroke="#5b3300" stroke-width="1.2" fill="none" stroke-linecap="round"/>
<ellipse cx="7.1" cy="8" rx="1.05" ry="1.3" fill="#4a2a00"/><ellipse cx="13.8" cy="7.5" rx="1.05" ry="1.3" fill="#4a2a00"/>
<path d="M9 12.8 Q11.2 11.9 13.6 13" stroke="#6b3d00" stroke-width="1" fill="none" stroke-linecap="round"/>
<path d="M3.2 13 C2.6 15.8 4 19 7.2 19.2 C9.8 19.4 11.8 18 12.4 16 C11.2 15.5 9.8 15.5 8.6 15.7 L9.6 13.6 C8.8 12.9 7.8 13.2 7.1 14.1 L5.6 11.9 C4.7 11.6 3.7 12 3.2 13 Z" fill="url(#hf)" stroke="#d97800" stroke-width="0.45"/>
</svg>


</body></html>
